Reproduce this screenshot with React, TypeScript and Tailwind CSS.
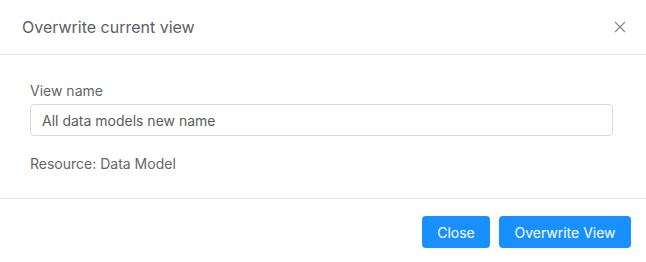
import React from "react";

export default function App() {
  return (
    <div className="w-[646px] h-[262px] bg-white font-['Inter',sans-serif] text-[#666666]">
      <div className="h-[55px] flex items-center justify-between pl-[22px] pr-[20px] border-b border-[#e5e5e5]">
        <div className="text-[16px] text-[#5c6066]">Overwrite current view</div>
        <svg width="12" height="12" viewBox="0 0 12 12" className="text-[#8c8c8c]">
          <path d="M1 1L11 11M11 1L1 11" stroke="currentColor" strokeWidth="1.3" />
        </svg>
      </div>
      <div className="px-[30px] pt-[26px] pb-[24px] border-b border-[#e5e5e5]">
        <div className="text-[14px] leading-[20px]">View name</div>
        <div className="mt-[3px] mr-[3px] h-[32px] border border-[#d9d9d9] rounded-[4px] flex items-center px-[11px] text-[14px] text-[#5c5c5c]">
          All data models new name
        </div>
        <div className="mt-[18px] text-[14px] leading-[20px]">Resource: Data Model</div>
      </div>
      <div className="flex justify-end gap-[9px] pt-[17px] pr-[15px]">
        <button className="h-[32px] w-[68px] rounded-[4px] bg-[#1890ff] text-white text-[14px]">Close</button>
        <button className="h-[32px] w-[132px] rounded-[4px] bg-[#1890ff] text-white text-[14px]">Overwrite View</button>
      </div>
    </div>
  );
}
